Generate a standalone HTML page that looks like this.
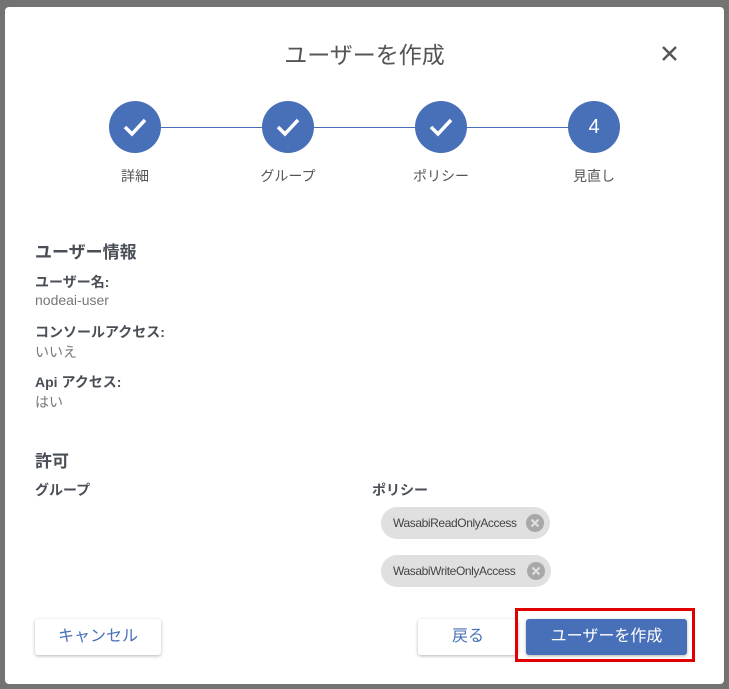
<!DOCTYPE html>
<html><head><meta charset="utf-8"><style>
body{margin:0;width:729px;height:689px;background:#737373;position:relative;overflow:hidden;font-family:"Liberation Sans","Noto Sans CJK JP",sans-serif;}
.dlg{position:absolute;left:5px;top:7px;width:719px;height:677px;background:#fff;border-radius:4px;}
.a{position:absolute;white-space:nowrap;}
.circ{position:absolute;width:52px;height:52px;border-radius:50%;background:#4870b8;top:101px;}
.circ svg{position:absolute;left:12px;top:12px;}
.lbl{position:absolute;top:166px;font-size:14px;color:#555;width:100px;text-align:center;}
.h{font-size:17px;font-weight:bold;color:#4a4f57;}
.k{font-size:14px;font-weight:bold;color:#4a4f57;}
.v{font-size:14px;color:#777;}
.chip{position:absolute;left:381px;height:32px;border-radius:16px;background:#e0e0e0;font-size:12px;letter-spacing:-0.4px;color:#444;line-height:32px;padding-left:12px;box-sizing:border-box;}
.chip svg{position:absolute;right:6px;top:7px;}
.btn{position:absolute;top:619px;height:36px;border-radius:3px;box-shadow:0 1px 3px rgba(0,0,0,.3);font-size:16px;text-align:center;line-height:36px;}
</style></head><body>
<div class="dlg"></div>
<div class="a" style="left:0;width:729px;top:36px;text-align:center;font-size:23px;color:#555">ユーザーを作成</div>
<svg class="a" style="left:661px;top:45px" width="17" height="17"><path d="M2 2L15 15M15 2L2 15" stroke="#555" stroke-width="2.4"/></svg>
<div class="a" style="left:135px;top:127px;width:460px;height:1px;background:#4870b8"></div>
<div class="circ" style="left:109px"><svg width="28" height="28"><path d="M4 14L11 21L24 7" stroke="#fff" stroke-width="3.5" fill="none"/></svg></div>
<div class="circ" style="left:262px"><svg width="28" height="28"><path d="M4 14L11 21L24 7" stroke="#fff" stroke-width="3.5" fill="none"/></svg></div>
<div class="circ" style="left:415px"><svg width="28" height="28"><path d="M4 14L11 21L24 7" stroke="#fff" stroke-width="3.5" fill="none"/></svg></div>
<div class="circ" style="left:568px;color:#fff;font-size:20px;text-align:center;line-height:52px">4</div>
<div class="lbl" style="left:85px">詳細</div>
<div class="lbl" style="left:238px">グループ</div>
<div class="lbl" style="left:391px">ポリシー</div>
<div class="lbl" style="left:544px">見直し</div>
<div class="a h" style="left:35px;top:238px">ユーザー情報</div>
<div class="a k" style="left:35px;top:272px">ユーザー名:</div>
<div class="a v" style="left:35px;top:292px">nodeai-user</div>
<div class="a k" style="left:35px;top:322px">コンソールアクセス:</div>
<div class="a v" style="left:35px;top:342px">いいえ</div>
<div class="a k" style="left:35px;top:372px">Api アクセス:</div>
<div class="a v" style="left:35px;top:392px">はい</div>
<div class="a h" style="left:35px;top:447px">許可</div>
<div class="a k" style="left:35px;top:480px">グループ</div>
<div class="a k" style="left:372px;top:480px">ポリシー</div>
<div class="chip" style="top:507px;width:169px">WasabiReadOnlyAccess<svg width="18" height="18"><circle cx="9" cy="9" r="9" fill="#a8a8a8"/><path d="M5.5 5.5L12.5 12.5M12.5 5.5L5.5 12.5" stroke="#e0e0e0" stroke-width="2"/></svg></div>
<div class="chip" style="top:555px;width:170px">WasabiWriteOnlyAccess<svg width="18" height="18"><circle cx="9" cy="9" r="9" fill="#a8a8a8"/><path d="M5.5 5.5L12.5 12.5M12.5 5.5L5.5 12.5" stroke="#e0e0e0" stroke-width="2"/></svg></div>
<div class="btn" style="left:35px;width:126px;background:#fff;color:#4870b8">キャンセル</div>
<div class="btn" style="left:418px;width:100px;background:#fff;color:#4870b8">戻る</div>
<div class="a" style="left:515px;top:608px;width:180px;height:54px;border:3px solid #e00000;box-sizing:border-box"></div>
<div class="btn" style="left:526px;width:161px;background:#4870b8;color:#fff">ユーザーを作成</div>
</body></html>
